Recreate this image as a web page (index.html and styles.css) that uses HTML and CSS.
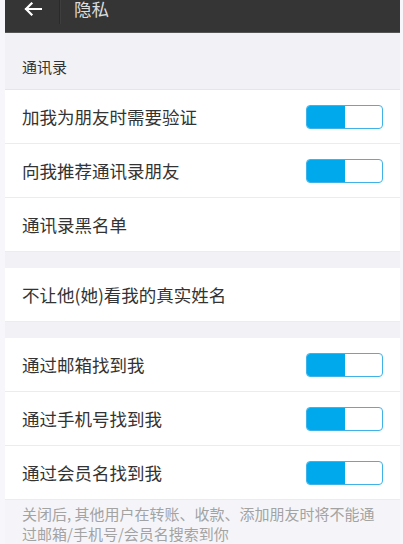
FILE: index.html
```html
<!DOCTYPE html>
<html lang="zh-CN">
<head>
    <meta charset="UTF-8">
    <meta name="viewport" content="width=device-width, initial-scale=1.0">
    <title>隐私</title>
    <link rel="stylesheet" href="styles.css">
</head>
<body>
    <div class="app">
        <div class="topbar">
            <span class="back">
                <svg width="18" height="14" viewBox="0 0 18 14">
                    <path d="M17 7H2M7.5 1.5L2 7l5.5 5.5" fill="none" stroke="#fff" stroke-width="2.2" stroke-linecap="square"/>
                </svg>
            </span>
            <span class="divider"></span>
            <span class="title">隐私</span>
        </div>

        <div class="section-label">通讯录</div>

        <div class="group">
            <div class="row">
                <span>加我为朋友时需要验证</span>
                <span class="toggle"><span class="on"></span></span>
            </div>
            <div class="row">
                <span>向我推荐通讯录朋友</span>
                <span class="toggle"><span class="on"></span></span>
            </div>
            <div class="row">
                <span>通讯录黑名单</span>
            </div>
        </div>

        <div class="group">
            <div class="row">
                <span>不让他(她)看我的真实姓名</span>
            </div>
        </div>

        <div class="group">
            <div class="row">
                <span>通过邮箱找到我</span>
                <span class="toggle"><span class="on"></span></span>
            </div>
            <div class="row">
                <span>通过手机号找到我</span>
                <span class="toggle"><span class="on"></span></span>
            </div>
            <div class="row">
                <span>通过会员名找到我</span>
                <span class="toggle"><span class="on"></span></span>
            </div>
        </div>

        <p class="note">关闭后, 其他用户在转账、收款、添加朋友时将不能通过邮箱/手机号/会员名搜索到你</p>
    </div>
</body>
</html>
```

FILE: styles.css
```css
body {
    margin: 0;
    background-color: #f7f7fb;
    font-family: "Noto Sans CJK SC", "Noto Sans", sans-serif;
    overflow: hidden;
}
.app {
    margin: 0 3px 0 5px;
    background-color: #f2f2f6;
    min-height: 544px;
}
.topbar {
    height: 46px;
    margin-top: -14px;
    background-color: #353535;
    border-bottom: 1px solid #555;
    display: flex;
    align-items: center;
}
.back {
    width: 52px;
    display: flex;
    justify-content: center;
    padding-left: 2px;
}
.back svg {
    display: block;
}
.divider {
    width: 1px;
    height: 34px;
    margin-top: -4px;
    background-color: #2a2a2a;
    border-right: 1px solid #3e3e3e;
}
.title {
    margin-left: 13px;
    color: #dcdcdc;
    font-size: 17.5px;
    line-height: 18px;
}
.section-label {
    height: 57px;
    box-sizing: border-box;
    padding: 24px 17px 0;
    font-size: 15px;
    line-height: 20px;
    color: #333;
    border-bottom: 1px solid #e6e6ea;
}
.group {
    background-color: #fff;
    margin-bottom: 16px;
}
.group:last-of-type {
    margin-bottom: 0;
}
.row {
    height: 53px;
    display: flex;
    align-items: center;
    justify-content: space-between;
    padding: 0 17px;
    border-bottom: 1px solid #ececf0;
    font-size: 17.5px;
    color: #333;
}
.toggle {
    width: 77px;
    height: 24px;
    box-sizing: border-box;
    border: 1px solid #3fb3e8;
    border-radius: 4px;
    background-color: #fff;
    overflow: hidden;
    display: flex;
}
.toggle .on {
    width: 38px;
    background-color: #00a8ec;
}
.note {
    margin: 0;
    padding: 4px 17px 0;
    font-size: 15px;
    line-height: 20px;
    color: #a3a3a3;
    background-color: #f5f5f9;
}
```
